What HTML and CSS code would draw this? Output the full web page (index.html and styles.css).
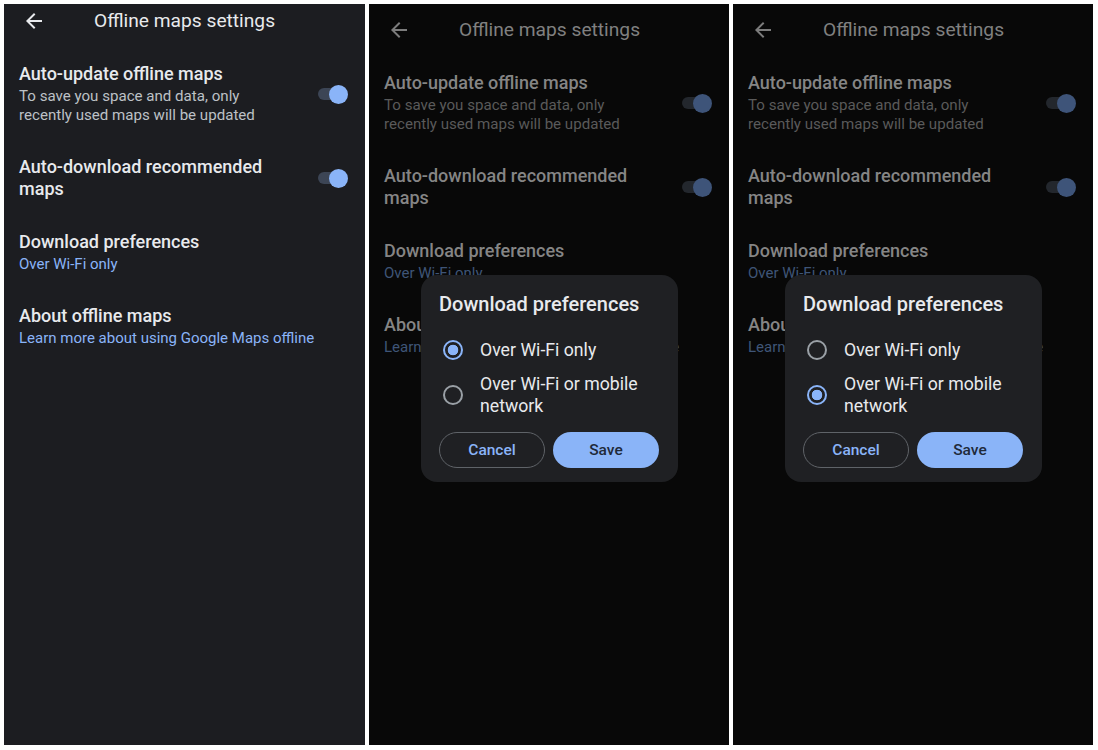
FILE: index.html
```html
<!DOCTYPE html>
<html lang="en">
<head>
<meta charset="utf-8">
<title>Offline maps settings</title>
<link rel="stylesheet" href="styles.css">
</head>
<body>
<div class="screens">
  <section class="screen">
    <header class="appbar">
      <svg class="back" viewBox="0 0 24 24" width="24" height="24"><path d="M20 11H7.83l5.59-5.59L12 4l-8 8 8 8 1.41-1.41L7.83 13H20v-2z"/></svg>
      <h1 class="appbar-title">Offline maps settings</h1>
    </header>
    <div class="settings">
      <div class="setting">
        <div class="setting-text">
          <div class="setting-title">Auto-update offline maps</div>
          <div class="setting-sub">To save you space and data, only recently used maps will be updated</div>
        </div>
        <span class="switch"><span class="switch-thumb"></span></span>
      </div>
      <div class="setting">
        <div class="setting-text">
          <div class="setting-title">Auto-download recommended maps</div>
        </div>
        <span class="switch"><span class="switch-thumb"></span></span>
      </div>
      <div class="setting">
        <div class="setting-text">
          <div class="setting-title">Download preferences</div>
          <div class="setting-link">Over Wi-Fi only</div>
        </div>
      </div>
      <div class="setting">
        <div class="setting-text">
          <div class="setting-title">About offline maps</div>
          <div class="setting-link">Learn more about using Google Maps offline</div>
        </div>
      </div>
    </div>
  </section>

  <section class="screen screen--dimmed">
    <header class="appbar">
      <svg class="back" viewBox="0 0 24 24" width="24" height="24"><path d="M20 11H7.83l5.59-5.59L12 4l-8 8 8 8 1.41-1.41L7.83 13H20v-2z"/></svg>
      <h1 class="appbar-title">Offline maps settings</h1>
    </header>
    <div class="settings">
      <div class="setting">
        <div class="setting-text">
          <div class="setting-title">Auto-update offline maps</div>
          <div class="setting-sub">To save you space and data, only recently used maps will be updated</div>
        </div>
        <span class="switch"><span class="switch-thumb"></span></span>
      </div>
      <div class="setting">
        <div class="setting-text">
          <div class="setting-title">Auto-download recommended maps</div>
        </div>
        <span class="switch"><span class="switch-thumb"></span></span>
      </div>
      <div class="setting">
        <div class="setting-text">
          <div class="setting-title">Download preferences</div>
          <div class="setting-link">Over Wi-Fi only</div>
        </div>
      </div>
      <div class="setting">
        <div class="setting-text">
          <div class="setting-title">About offline maps</div>
          <div class="setting-link">Learn more about using Google Maps offline</div>
        </div>
      </div>
    </div>
    <div class="dialog">
      <div class="dialog-title">Download preferences</div>
      <div class="options">
        <div class="option"><span class="radio radio--on"></span><span class="option-label">Over Wi-Fi only</span></div>
        <div class="option"><span class="radio"></span><span class="option-label">Over Wi-Fi or mobile network</span></div>
      </div>
      <div class="actions">
        <button class="btn btn--outline">Cancel</button>
        <button class="btn btn--filled">Save</button>
      </div>
    </div>
  </section>

  <section class="screen screen--dimmed">
    <header class="appbar">
      <svg class="back" viewBox="0 0 24 24" width="24" height="24"><path d="M20 11H7.83l5.59-5.59L12 4l-8 8 8 8 1.41-1.41L7.83 13H20v-2z"/></svg>
      <h1 class="appbar-title">Offline maps settings</h1>
    </header>
    <div class="settings">
      <div class="setting">
        <div class="setting-text">
          <div class="setting-title">Auto-update offline maps</div>
          <div class="setting-sub">To save you space and data, only recently used maps will be updated</div>
        </div>
        <span class="switch"><span class="switch-thumb"></span></span>
      </div>
      <div class="setting">
        <div class="setting-text">
          <div class="setting-title">Auto-download recommended maps</div>
        </div>
        <span class="switch"><span class="switch-thumb"></span></span>
      </div>
      <div class="setting">
        <div class="setting-text">
          <div class="setting-title">Download preferences</div>
          <div class="setting-link">Over Wi-Fi only</div>
        </div>
      </div>
      <div class="setting">
        <div class="setting-text">
          <div class="setting-title">About offline maps</div>
          <div class="setting-link">Learn more about using Google Maps offline</div>
        </div>
      </div>
    </div>
    <div class="dialog">
      <div class="dialog-title">Download preferences</div>
      <div class="options">
        <div class="option"><span class="radio"></span><span class="option-label">Over Wi-Fi only</span></div>
        <div class="option"><span class="radio radio--on"></span><span class="option-label">Over Wi-Fi or mobile network</span></div>
      </div>
      <div class="actions">
        <button class="btn btn--outline">Cancel</button>
        <button class="btn btn--filled">Save</button>
      </div>
    </div>
  </section>
</div>
</body>
</html>
```

FILE: styles.css
```css
* { box-sizing: border-box; }

html, body {
  margin: 0;
  padding: 0;
  background: #ffffff;
}

body {
  font-family: Roboto, "Liberation Sans", sans-serif;
  width: 1098px;
  height: 750px;
  overflow: hidden;
}

.screens {
  display: flex;
  gap: 4px;
  padding: 4px 5px 5px 4px;
  height: 750px;
}

.screen {
  position: relative;
  width: 360px;
  height: 741px;
  flex: none;
  background: #1c1d21;
  padding: 1px 21px 0 15px;
  overflow: hidden;
}

.screen:first-child { width: 361px; }

/* App bar */
.appbar {
  display: flex;
  align-items: center;
  height: 32px;
  margin-bottom: 26px;
}

.back {
  flex: none;
  margin-left: 3px;
  fill: #e8eaed;
}

.appbar-title {
  margin: 0 0 0 48px;
  font-size: 19.2px;
  font-weight: 400;
  color: #e8eaed;
  line-height: 32px;
  letter-spacing: 0;
  white-space: nowrap;
}

/* Settings list */
.settings {
  display: flex;
  flex-direction: column;
  gap: 31px;
}

.setting {
  display: flex;
  align-items: center;
}

.setting-text {
  flex: 1;
  min-width: 0;
}

.setting-title {
  font-size: 18px;
  font-weight: 500;
  line-height: 22px;
  color: #e8eaed;
}

.setting-sub {
  margin-top: 2px;
  font-size: 15.1px;
  line-height: 19px;
  color: #bdc1c6;
}

.setting-link {
  margin-top: 2px;
  font-size: 15px;
  line-height: 19px;
  color: #8ab4f8;
  white-space: nowrap;
}

/* Switch */
.switch {
  position: relative;
  flex: none;
  width: 26px;
  height: 12px;
  margin-left: 30px;
  border-radius: 6px;
  background: #3c4555;
}

.switch-thumb {
  position: absolute;
  right: -3.5px;
  top: 50%;
  width: 19px;
  height: 19px;
  margin-top: -9.5px;
  border-radius: 50%;
  background: #8ab4f8;
}

/* Dimmed (dialog open) screens */
.screen--dimmed {
  background: #080808;
  padding-top: 10px;
}

.screen--dimmed .back { fill: #7c7c7c; }
.screen--dimmed .appbar-title { color: #808080; }
.screen--dimmed .setting-title { color: #858585; }
.screen--dimmed .setting-sub { color: #5a5a5a; }
.screen--dimmed .setting-link { color: #3f5577; }
.screen--dimmed .switch { background: #23272d; }
.screen--dimmed .switch-thumb { background: #3e5479; }

/* Dialog */
.dialog {
  position: absolute;
  left: 52px;
  top: 271px;
  width: 257px;
  padding: 17px 18px 14px;
  border-radius: 16px;
  background: #1f2023;
}

.dialog-title {
  font-size: 20px;
  font-weight: 500;
  line-height: 24px;
  color: #e8eaed;
  white-space: nowrap;
}

.options {
  display: flex;
  flex-direction: column;
  gap: 12px;
  margin-top: 23px;
}

.option {
  display: flex;
  align-items: center;
  gap: 17px;
  padding-left: 4px;
}

.radio {
  flex: none;
  width: 20px;
  height: 20px;
  border: 2px solid #9aa0a6;
  border-radius: 50%;
}

.radio--on {
  border-color: #8ab4f8;
  background: radial-gradient(circle, #8ab4f8 0 5px, transparent 5.6px);
}

.option-label {
  font-size: 17.7px;
  line-height: 22px;
  color: #e8eaed;
}

.actions {
  display: flex;
  gap: 8px;
  margin-top: 15px;
}

.btn {
  width: 106px;
  height: 36px;
  border-radius: 18px;
  font-family: Roboto, "Liberation Sans", sans-serif;
  font-size: 15.5px;
  font-weight: 500;
  padding: 0;
  cursor: pointer;
}

.btn--outline {
  background: transparent;
  border: 1px solid #5f6368;
  color: #8ab4f8;
}

.btn--filled {
  background: #8ab4f8;
  border: none;
  color: #1f2a3a;
}
```
